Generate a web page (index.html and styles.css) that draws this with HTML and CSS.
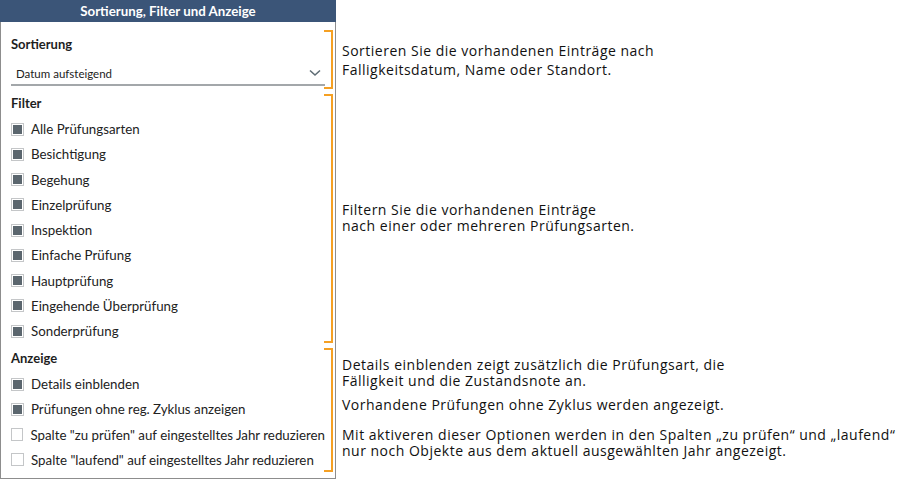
FILE: index.html
```html
<!DOCTYPE html>
<html>
<head>
    <title>Sortierung, Filter und Anzeige</title>
    <link rel="stylesheet" href="styles.css">
</head>
<body>
    <div class="page">
        <div class="panel">
            <div class="panel-header">Sortierung, Filter und Anzeige</div>

            <div class="section section-sort">
                <div class="section-title">Sortierung</div>
                <div class="select">
                    <span>Datum aufsteigend</span>
                    <svg class="chevron" width="12" height="8" viewBox="0 0 12 8">
                        <polyline points="1,1.5 6,6 11,1.5" fill="none" stroke="#5f6d75" stroke-width="1.6"/>
                    </svg>
                </div>
            </div>

            <div class="section section-filter">
                <div class="section-title">Filter</div>
                <div class="check"><span class="box checked"></span>Alle Prüfungsarten</div>
                <div class="check"><span class="box checked"></span>Besichtigung</div>
                <div class="check"><span class="box checked"></span>Begehung</div>
                <div class="check"><span class="box checked"></span>Einzelprüfung</div>
                <div class="check"><span class="box checked"></span>Inspektion</div>
                <div class="check"><span class="box checked"></span>Einfache Prüfung</div>
                <div class="check"><span class="box checked"></span>Hauptprüfung</div>
                <div class="check"><span class="box checked"></span>Eingehende Überprüfung</div>
                <div class="check"><span class="box checked"></span>Sonderprüfung</div>
            </div>

            <div class="section section-view">
                <div class="section-title">Anzeige</div>
                <div class="check"><span class="box checked"></span>Details einblenden</div>
                <div class="check"><span class="box checked"></span>Prüfungen ohne reg. Zyklus anzeigen</div>
                <div class="check"><span class="box"></span>Spalte "zu prüfen" auf eingestelltes Jahr reduzieren</div>
                <div class="check"><span class="box"></span>Spalte "laufend" auf eingestelltes Jahr reduzieren</div>
            </div>
        </div>

        <div class="notes">
            <p class="note note-sort">Sortieren Sie die vorhandenen Einträge nach<br>Falligkeitsdatum, Name oder Standort.</p>
            <p class="note note-filter">Filtern Sie die vorhandenen Einträge<br>nach einer oder mehreren Prüfungsarten.</p>
            <p class="note note-details">Details einblenden zeigt zusätzlich die Prüfungsart, die<br>Fälligkeit und die Zustandsnote an.</p>
            <p class="note note-cycle">Vorhandene Prüfungen ohne Zyklus werden angezeigt.</p>
            <p class="note note-year">Mit aktiveren dieser Optionen werden in den Spalten „zu prüfen“ und „laufend“<br>nur noch Objekte aus dem aktuell ausgewählten Jahr angezeigt.</p>
        </div>
    </div>
</body>
</html>
```

FILE: styles.css
```css
/* Panel on the left, explanations on the right */
body {
    margin: 0;
    padding: 0;
    background-color: #fff;
    font-family: Lato, "Noto Sans", sans-serif;
    color: #222;
}
.page {
    display: flex;
    width: 904px;
    height: 479px;
}
.panel {
    width: 336px;
    height: 479px;
    box-sizing: border-box;
    border: 1px solid #8d8d8d;
    border-top: none;
    display: flex;
    flex-direction: column;
}
.panel-header {
    height: 22px;
    margin: 0 -1px;
    background-color: #3b5578;
    color: #fff;
    font-weight: bold;
    font-size: 13.3px;
    line-height: 22px;
    text-align: center;
}
.section {
    position: relative;
    padding-left: 10px;
    padding-right: 10px;
}
/* orange bracket marking each section */
.section::after {
    content: "";
    position: absolute;
    top: 2px;
    bottom: 2px;
    right: 2px;
    width: 7px;
    border: 2px solid #f5a023;
    border-left: none;
}
.section-title {
    font-size: 13px;
    font-weight: bold;
    line-height: 18px;
    color: #1e1e1e;
}
.section-sort {
    margin-top: 6px;
    height: 63px;
    padding-top: 7px;
    box-sizing: border-box;
}
.select {
    margin-top: 9px;
    height: 22px;
    border-bottom: 2px solid #a3a7aa;
    display: flex;
    align-items: center;
    justify-content: space-between;
    padding: 0 4px 0 5px;
    font-size: 11.5px;
}
.section-filter {
    margin-top: 1px;
    height: 253px;
    padding-top: 2px;
    box-sizing: border-box;
}
.section-filter .section-title {
    margin-bottom: 4.5px;
}
.section-view {
    margin-top: 1px;
    height: 128px;
    padding-top: 3px;
    box-sizing: border-box;
}
.section-view .section-title {
    margin-bottom: 4.5px;
}
.check {
    height: 25.25px;
    display: flex;
    align-items: center;
    font-size: 13.3px;
    white-space: nowrap;
}
.box {
    width: 9px;
    height: 9px;
    border: 1px solid #c4c6c8;
    margin-right: 7px;
    padding: 1px;
    box-sizing: content-box;
    background-clip: content-box;
    background-color: #fff;
}
.box.checked {
    background-color: #5b666e;
}
.notes {
    padding-left: 6px;
    padding-top: 42px;
    font-family: "Open Sans", "Noto Sans", sans-serif;
    font-size: 14px;
    letter-spacing: 0.5px;
    color: #111;
}
.note {
    margin: 0;
    line-height: 16px;
    white-space: nowrap;
}
.note-sort {
    line-height: 18.5px;
}
.note-filter {
    margin-top: 122.5px;
}
.note-details {
    margin-top: 123px;
}
.note-cycle {
    margin-top: 8px;
}
.note-year {
    margin-top: 14px;
}
```
